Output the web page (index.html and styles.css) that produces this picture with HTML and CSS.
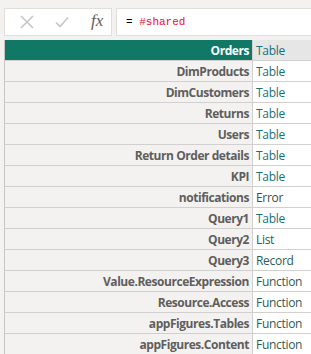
FILE: index.html
```html
<!DOCTYPE html>
<html lang="en">
<head>
  <meta charset="UTF-8" />
  <title>Navigator</title>
  <link rel="stylesheet" href="styles.css">
</head>
<body>

  <div class="bar">
    <div class="tools">
      <svg class="ico" width="14" height="14" viewBox="0 0 14 14"><path d="M1 1 L13 13 M13 1 L1 13" stroke="#c8c6c4" stroke-width="1.6" fill="none"/></svg>
      <svg class="ico" width="14" height="14" viewBox="0 0 14 14"><path d="M1 7.5 L5 11.5 L13 2.5" stroke="#c8c6c4" stroke-width="1.6" fill="none"/></svg>
      <span class="fx">fx</span>
    </div>
    <div class="formula"><span class="eq">=</span> <span class="kw">#shared</span></div>
  </div>

  <div class="grid">
    <div class="name head">Orders</div><div class="type head">Table</div>
    <div class="name">DimProducts</div><div class="type">Table</div>
    <div class="name">DimCustomers</div><div class="type">Table</div>
    <div class="name">Returns</div><div class="type">Table</div>
    <div class="name">Users</div><div class="type">Table</div>
    <div class="name">Return Order details</div><div class="type">Table</div>
    <div class="name">KPI</div><div class="type">Table</div>
    <div class="name">notifications</div><div class="type err">Error</div>
    <div class="name">Query1</div><div class="type">Table</div>
    <div class="name">Query2</div><div class="type dark">List</div>
    <div class="name">Query3</div><div class="type dark">Record</div>
    <div class="name">Value.ResourceExpression</div><div class="type dark">Function</div>
    <div class="name">Resource.Access</div><div class="type dark">Function</div>
    <div class="name">appFigures.Tables</div><div class="type dark">Function</div>
    <div class="name">appFigures.Content</div><div class="type dark">Function</div>
  </div>

</body>
</html>
```

FILE: styles.css
```css
body {
  margin: 0;
  background: #f3f2f1;
  font-family: "Open Sans", "Noto Sans", sans-serif;
  overflow: hidden;
}
.bar {
  display: flex;
  gap: 4px;
  padding: 8px 0 0 4px;
  height: 28px;
}
.tools {
  width: 108px;
  box-sizing: border-box;
  background: #fff;
  border: 1px solid #e1dfdd;
  display: flex;
  align-items: center;
  padding-left: 15px;
  gap: 21px;
}
.fx {
  font-family: "Liberation Serif", serif;
  font-style: italic;
  font-size: 17px;
  color: #605e5c;
  margin-left: 1px;
  margin-top: -3px;
}
.formula {
  flex: 1;
  background: #fff;
  border: 1px solid #e1dfdd;
  border-right: none;
  font-family: "Liberation Mono", monospace;
  font-size: 11px;
  line-height: 26px;
  padding-left: 9px;
}
.eq {
  color: #000;
}
.kw {
  color: #e8102e;
}
.grid {
  display: grid;
  grid-template-columns: 248px 1fr;
  margin: 4px 0 0 4px;
  border-left: 1px solid #c8c6c4;
}
.name, .type {
  height: 20px;
  line-height: 22px;
  border-bottom: 1px solid #d2d0ce;
  font-size: 12px;
  white-space: nowrap;
}
.name {
  text-align: right;
  font-weight: 700;
  color: #605e5c;
  padding-right: 3px;
  border-right: 1px solid #d2d0ce;
  letter-spacing: -0.45px;
}
.type {
  background: #fff;
  color: #1a6f78;
  padding-left: 3px;
  letter-spacing: -0.3px;
}
.name.head {
  background: #117865;
  color: #fff;
}
.type.head {
  background: #e6e6e6;
}
.type.err {
  color: #3b4a48;
}
.type.dark {
  color: #2e5b57;
}
```
